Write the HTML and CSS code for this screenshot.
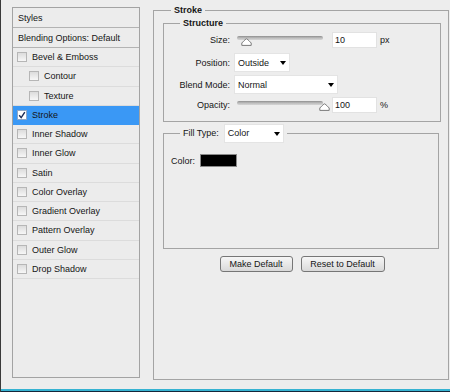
FILE: index.html
```html
<!DOCTYPE html>
<html lang="en">
<head>
    <meta charset="UTF-8">
    <title>Layer Style - Stroke</title>
    <link rel="stylesheet" href="styles.css">
</head>
<body>
    <div class="window">
        <div class="dialog">
            <!-- Effects list -->
            <aside class="styles-panel">
                <div class="panel-head">Styles</div>
                <div class="panel-head">Blending Options: Default</div>
                <ul class="effects">
                    <li class="effect"><span class="check"></span>Bevel &amp; Emboss</li>
                    <li class="effect sub"><span class="check"></span>Contour</li>
                    <li class="effect sub"><span class="check"></span>Texture</li>
                    <li class="effect selected">
                        <span class="check on">
                            <svg width="8" height="8" viewBox="0 0 8 8"><path d="M1.2 4.2 L3.2 6.6 L6.8 1.2" fill="none" stroke="#1b2a55" stroke-width="1.4"/></svg>
                        </span>Stroke
                    </li>
                    <li class="effect"><span class="check"></span>Inner Shadow</li>
                    <li class="effect"><span class="check"></span>Inner Glow</li>
                    <li class="effect"><span class="check"></span>Satin</li>
                    <li class="effect"><span class="check"></span>Color Overlay</li>
                    <li class="effect"><span class="check"></span>Gradient Overlay</li>
                    <li class="effect"><span class="check"></span>Pattern Overlay</li>
                    <li class="effect"><span class="check"></span>Outer Glow</li>
                    <li class="effect"><span class="check"></span>Drop Shadow</li>
                </ul>
            </aside>

            <!-- Stroke settings -->
            <fieldset class="group stroke-group">
                <legend>Stroke</legend>
                <div class="stroke-body">
                    <fieldset class="group structure">
                        <legend>Structure</legend>
                        <div class="form-grid">
                            <label>Size:</label>
                            <div class="field">
                                <div class="slider">
                                    <div class="track"></div>
                                    <svg class="thumb" style="left:4px" width="11" height="8" viewBox="0 0 11 8"><path d="M5.5 0.8 Q6.2 0.8 10.2 5 V7.4 H0.8 V5 Q4.8 0.8 5.5 0.8 Z" fill="#fff" stroke="#7a7a7a"/></svg>
                                </div>
                                <div class="input">10</div>
                                <span class="unit">px</span>
                            </div>

                            <label>Position:</label>
                            <div class="field">
                                <div class="select select-position">Outside<span class="arrow"></span></div>
                            </div>

                            <label>Blend Mode:</label>
                            <div class="field">
                                <div class="select select-blend">Normal<span class="arrow"></span></div>
                            </div>

                            <label>Opacity:</label>
                            <div class="field">
                                <div class="slider">
                                    <div class="track"></div>
                                    <svg class="thumb" style="left:82px" width="11" height="8" viewBox="0 0 11 8"><path d="M5.5 0.8 Q6.2 0.8 10.2 5 V7.4 H0.8 V5 Q4.8 0.8 5.5 0.8 Z" fill="#fff" stroke="#7a7a7a"/></svg>
                                </div>
                                <div class="input">100</div>
                                <span class="unit">%</span>
                            </div>
                        </div>
                    </fieldset>

                    <fieldset class="group fill">
                        <legend>
                            <span>Fill Type:</span>
                            <span class="select select-fill">Color<span class="arrow"></span></span>
                        </legend>
                        <div class="color-row">
                            <span>Color:</span>
                            <span class="swatch"></span>
                        </div>
                    </fieldset>

                    <div class="buttons">
                        <button class="btn btn-make">Make Default</button>
                        <button class="btn btn-reset">Reset to Default</button>
                    </div>
                </div>
            </fieldset>
        </div>
        <div class="taskbar-edge"></div>
    </div>
</body>
</html>
```

FILE: styles.css
```css
* {
    box-sizing: border-box;
}

body {
    margin: 0;
    width: 450px;
    height: 392px;
    overflow: hidden;
    background: #ededed;
    font-family: "Liberation Sans", Arial, sans-serif;
    font-size: 9px;
    color: #151515;
}

.window {
    height: 392px;
    display: flex;
    flex-direction: column;
    border-left: 1px solid #3a3a3a;
}

.dialog {
    flex: 1;
    display: flex;
    align-items: flex-start;
    padding: 7px 0 0 11px;
}

.taskbar-edge {
    height: 3px;
    border-top: 2px solid #36b3d2;
    background: #15263a;
}

/* left list */
.styles-panel {
    width: 128px;
    height: 371px;
    flex-shrink: 0;
    border: 1px solid #a3a3a3;
    background: #ececec;
}

.panel-head {
    height: 20px;
    display: flex;
    align-items: center;
    padding-left: 5px;
    border-bottom: 1px solid #b3b3b3;
}

.effects {
    list-style: none;
    margin: 0;
    padding: 0;
}

.effect {
    height: 19.25px;
    display: flex;
    align-items: center;
    gap: 5px;
    padding-left: 4px;
    border-bottom: 1px solid #dcdcdc;
}

.effect.sub {
    padding-left: 16px;
}

.effect.selected {
    background: #3a98f5;
    border-bottom-color: #3a98f5;
}

.check {
    width: 10px;
    height: 10px;
    flex-shrink: 0;
    display: flex;
    align-items: center;
    justify-content: center;
    border: 1px solid #b6b6b6;
    background: linear-gradient(#dcdcdc, #f7f7f7);
}

.check.on {
    background: #fff;
    border-color: #8fa7c6;
}

/* group boxes */
.group {
    padding: 0;
    min-width: 0;
    border: 1px solid #a4a4a4;
}

.group > legend {
    padding: 0 3px;
    line-height: 11px;
}

.stroke-group {
    width: 296px;
    height: 375px;
    margin: -2px 0 0 13px;
    flex-shrink: 0;
}

.stroke-group > legend {
    margin-left: 17px;
    font-weight: bold;
}

.stroke-body {
    padding: 0 7px 0 9px;
}

.structure {
    height: 104px;
    margin: 2px 0 0;
}

.structure > legend {
    margin-left: 16px;
    font-weight: bold;
}

.form-grid {
    display: grid;
    grid-template-columns: 66px 1fr;
    grid-template-rows: 22px 23px 21px 19px;
    column-gap: 4px;
    align-items: center;
}

.form-grid label {
    text-align: right;
}

.field {
    display: flex;
    align-items: center;
}

.slider {
    position: relative;
    width: 86px;
    height: 16px;
    margin-left: 3px;
}

.track {
    margin-top: 4px;
    height: 4px;
    border-radius: 2px;
    background: linear-gradient(#8e8e8e, #bdbdbd 50%, #d6d6d6);
}

.thumb {
    position: absolute;
    top: 6px;
}

.input {
    width: 45px;
    height: 16px;
    margin-left: 9px;
    padding-left: 2px;
    line-height: 14px;
    background: #fff;
    border: 1px solid #e2e2e2;
}

.unit {
    margin-left: 3px;
}

.select {
    height: 19px;
    display: flex;
    align-items: center;
    justify-content: space-between;
    padding: 0 3px;
    background: #fff;
    border: 1px solid #e4e4e4;
}

.select-position {
    width: 56px;
}

.select-blend {
    width: 104px;
}

.select-fill {
    width: 60px;
    margin-left: 5px;
}

.arrow {
    width: 0;
    height: 0;
    border-left: 3px solid transparent;
    border-right: 3px solid transparent;
    border-top: 4px solid #000;
}

.fill {
    height: 125px;
    margin: 2px 2px 0 0;
}

.fill > legend {
    margin-left: 16px;
    display: flex;
    align-items: center;
    line-height: 19px;
}

.color-row {
    display: flex;
    align-items: center;
    gap: 5px;
    padding: 11px 0 0 7px;
}

.swatch {
    width: 37px;
    height: 13px;
    background: #000;
    border: 1px solid #8a8a8a;
}

.buttons {
    display: flex;
    justify-content: center;
    gap: 8px;
    margin-top: 7px;
}

.btn {
    height: 16px;
    padding: 0;
    font: inherit;
    color: #151515;
    border: 1px solid #767676;
    border-radius: 3px;
    background: linear-gradient(#f6f6f6, #e8e8e8 50%, #d9d9d9);
}

.btn-make {
    width: 73px;
}

.btn-reset {
    width: 84px;
}
```
